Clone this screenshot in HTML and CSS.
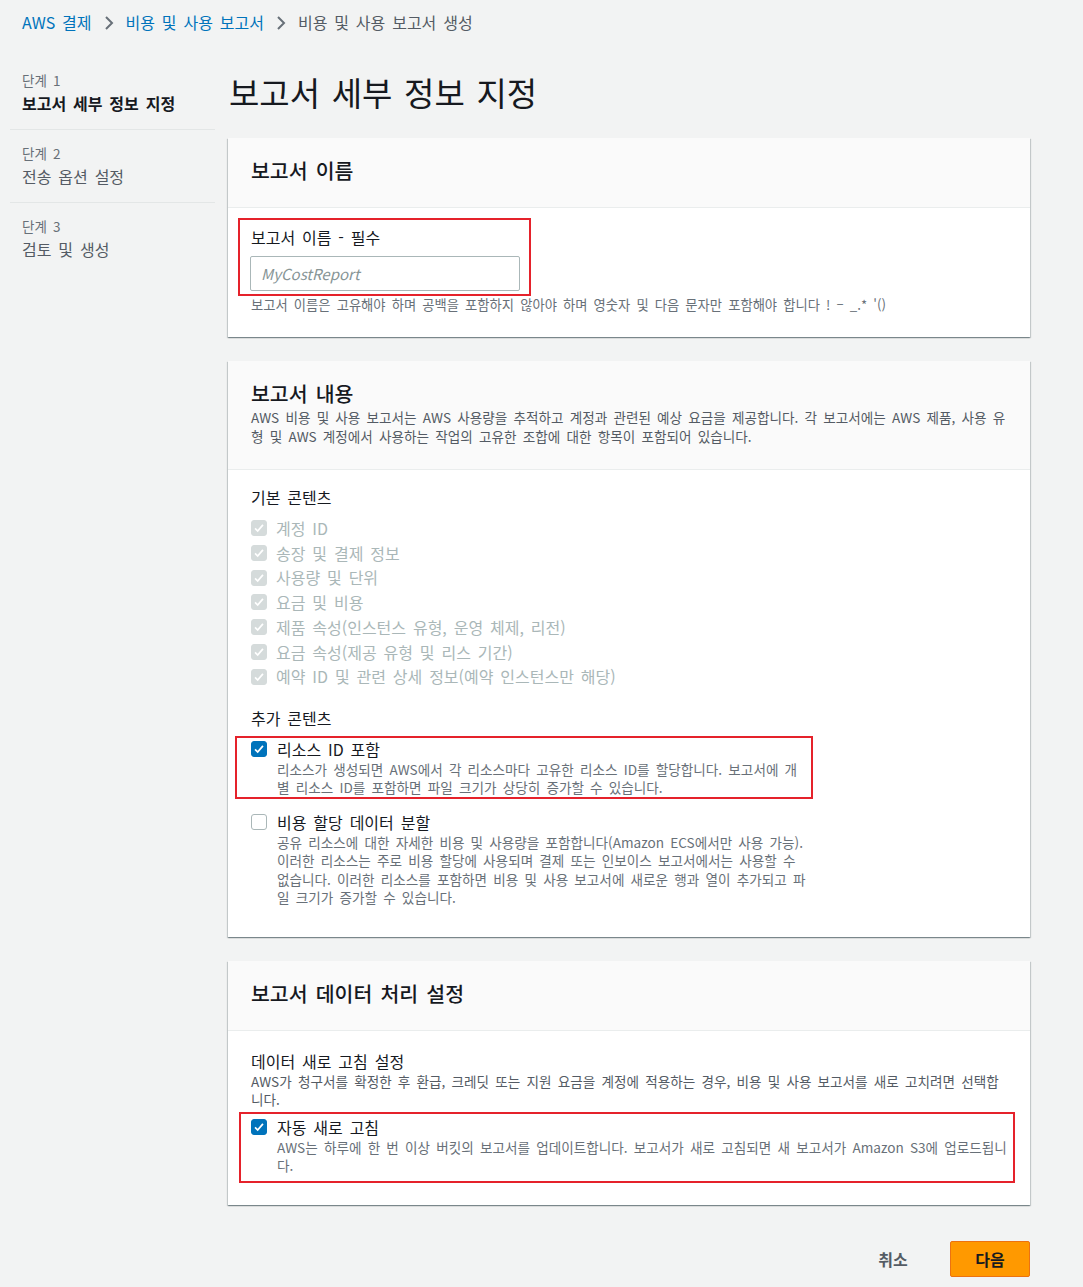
FILE: index.html
```html
<!DOCTYPE html>
<html lang="ko">
<head>
    <meta charset="UTF-8">
    <meta name="viewport" content="width=device-width, initial-scale=1.0">
    <title>비용 및 사용 보고서 생성</title>
    <link rel="stylesheet" href="styles.css">
</head>
<body>
    <nav class="breadcrumb">
        <a class="crumb-link" href="#">AWS 결제</a>
        <svg class="crumb-sep" viewBox="0 0 10 16"><polyline points="2,2 8,8 2,14" fill="none" stroke="#687078" stroke-width="2"/></svg>
        <a class="crumb-link" href="#">비용 및 사용 보고서</a>
        <svg class="crumb-sep" viewBox="0 0 10 16"><polyline points="2,2 8,8 2,14" fill="none" stroke="#687078" stroke-width="2"/></svg>
        <span class="crumb-current">비용 및 사용 보고서 생성</span>
    </nav>

    <div class="layout">
        <ul class="steps">
            <li class="step">
                <div class="step-num">단계 1</div>
                <div class="step-name active">보고서 세부 정보 지정</div>
            </li>
            <li class="step">
                <div class="step-num">단계 2</div>
                <div class="step-name">전송 옵션 설정</div>
            </li>
            <li class="step">
                <div class="step-num">단계 3</div>
                <div class="step-name">검토 및 생성</div>
            </li>
        </ul>

        <main class="main">
            <h1 class="page-title">보고서 세부 정보 지정</h1>

            <section class="panel">
                <div class="panel-header">
                    <h2 class="panel-title">보고서 이름</h2>
                </div>
                <div class="panel-body body-name">
                    <div class="highlight name-box">
                        <label class="field-label" for="report-name">보고서 이름 - 필수</label>
                        <input class="text-input" id="report-name" type="text" placeholder="MyCostReport">
                    </div>
                    <p class="hint">보고서 이름은 고유해야 하며 공백을 포함하지 않아야 하며 영숫자 및 다음 문자만 포함해야 합니다 ! – _.* '()</p>
                </div>
            </section>

            <section class="panel">
                <div class="panel-header">
                    <h2 class="panel-title">보고서 내용</h2>
                    <p class="panel-desc">AWS 비용 및 사용 보고서는 AWS 사용량을 추적하고 계정과 관련된 예상 요금을 제공합니다. 각 보고서에는 AWS 제품, 사용 유형 및 AWS 계정에서 사용하는 작업의 고유한 조합에 대한 항목이 포함되어 있습니다.</p>
                </div>
                <div class="panel-body body-content">
                    <div class="field-label">기본 콘텐츠</div>
                    <ul class="check-list">
                        <li class="check-row disabled"><span class="box checked"><svg viewBox="0 0 16 16"><polyline points="3.5,8.5 6.5,11.5 12.5,4.5"/></svg></span>계정 ID</li>
                        <li class="check-row disabled"><span class="box checked"><svg viewBox="0 0 16 16"><polyline points="3.5,8.5 6.5,11.5 12.5,4.5"/></svg></span>송장 및 결제 정보</li>
                        <li class="check-row disabled"><span class="box checked"><svg viewBox="0 0 16 16"><polyline points="3.5,8.5 6.5,11.5 12.5,4.5"/></svg></span>사용량 및 단위</li>
                        <li class="check-row disabled"><span class="box checked"><svg viewBox="0 0 16 16"><polyline points="3.5,8.5 6.5,11.5 12.5,4.5"/></svg></span>요금 및 비용</li>
                        <li class="check-row disabled"><span class="box checked"><svg viewBox="0 0 16 16"><polyline points="3.5,8.5 6.5,11.5 12.5,4.5"/></svg></span>제품 속성(인스턴스 유형, 운영 체제, 리전)</li>
                        <li class="check-row disabled"><span class="box checked"><svg viewBox="0 0 16 16"><polyline points="3.5,8.5 6.5,11.5 12.5,4.5"/></svg></span>요금 속성(제공 유형 및 리스 기간)</li>
                        <li class="check-row disabled"><span class="box checked"><svg viewBox="0 0 16 16"><polyline points="3.5,8.5 6.5,11.5 12.5,4.5"/></svg></span>예약 ID 및 관련 상세 정보(예약 인스턴스만 해당)</li>
                    </ul>

                    <div class="field-label extra-label">추가 콘텐츠</div>
                    <div class="highlight resource-box">
                        <div class="option">
                            <span class="box checked on"><svg viewBox="0 0 16 16"><polyline points="3.5,8.5 6.5,11.5 12.5,4.5"/></svg></span>
                            <div class="option-text">
                                <div class="option-label">리소스 ID 포함</div>
                                <p class="option-desc narrow">리소스가 생성되면 AWS에서 각 리소스마다 고유한 리소스 ID를 할당합니다. 보고서에 개별 리소스 ID를 포함하면 파일 크기가 상당히 증가할 수 있습니다.</p>
                            </div>
                        </div>
                    </div>
                    <div class="option split-option">
                        <span class="box"></span>
                        <div class="option-text">
                            <div class="option-label">비용 할당 데이터 분할</div>
                            <p class="option-desc narrow">공유 리소스에 대한 자세한 비용 및 사용량을 포함합니다(Amazon ECS에서만 사용 가능). 이러한 리소스는 주로 비용 할당에 사용되며 결제 또는 인보이스 보고서에서는 사용할 수 없습니다. 이러한 리소스를 포함하면 비용 및 사용 보고서에 새로운 행과 열이 추가되고 파일 크기가 증가할 수 있습니다.</p>
                        </div>
                    </div>
                </div>
            </section>

            <section class="panel">
                <div class="panel-header">
                    <h2 class="panel-title">보고서 데이터 처리 설정</h2>
                </div>
                <div class="panel-body body-refresh">
                    <div class="field-label">데이터 새로 고침 설정</div>
                    <p class="option-desc">AWS가 청구서를 확정한 후 환급, 크레딧 또는 지원 요금을 계정에 적용하는 경우, 비용 및 사용 보고서를 새로 고치려면 선택합니다.</p>
                    <div class="highlight refresh-box">
                        <div class="option">
                            <span class="box checked on"><svg viewBox="0 0 16 16"><polyline points="3.5,8.5 6.5,11.5 12.5,4.5"/></svg></span>
                            <div class="option-text">
                                <div class="option-label">자동 새로 고침</div>
                                <p class="option-desc">AWS는 하루에 한 번 이상 버킷의 보고서를 업데이트합니다. 보고서가 새로 고침되면 새 보고서가 Amazon S3에 업로드됩니다.</p>
                            </div>
                        </div>
                    </div>
                </div>
            </section>

            <div class="actions">
                <button class="btn-link" type="button">취소</button>
                <button class="btn-primary" type="button">다음</button>
            </div>
        </main>
    </div>
</body>
</html>
```

FILE: styles.css
```css
body {
    margin: 0;
    background-color: #f2f3f3;
    font-family: "Noto Sans CJK KR", "Noto Sans", sans-serif;
    color: #16191f;
    word-spacing: 0.15em;
}

p, h1, h2, ul {
    margin: 0;
    padding: 0;
}

ul {
    list-style: none;
}

/* breadcrumb */
.breadcrumb {
    height: 57px;
    box-sizing: border-box;
    padding: 11px 0 0 22px;
    display: flex;
    align-items: flex-start;
    gap: 12px;
    font-size: 16px;
    line-height: 22px;
}

.crumb-link {
    color: #0073bb;
    text-decoration: none;
}

.crumb-current {
    color: #545b64;
}

.crumb-sep {
    width: 10px;
    height: 16px;
    margin-top: 4px;
}

/* layout */
.layout {
    display: flex;
}

.steps {
    width: 205px;
    margin-left: 10px;
}

.step {
    padding: 14px 0 14px 12px;
    border-bottom: 1px solid #e3e6e6;
}

.step:last-child {
    border-bottom: none;
}

.step-num {
    font-size: 13.5px;
    line-height: 18px;
    color: #687078;
}

.step-name {
    margin-top: 2px;
    font-size: 16px;
    line-height: 24px;
    color: #545b64;
}

.step-name.active {
    color: #16191f;
    font-weight: 700;
}

.main {
    width: 802px;
    margin-left: 13px;
}

.page-title {
    margin: 17px 0 28px 1px;
    font-size: 33px;
    line-height: 36px;
    font-weight: 400;
}

/* panels */
.panel {
    background: #fff;
    margin-bottom: 24px;
    box-shadow: 0 1px 1px 0 rgba(0, 28, 36, 0.3), 1px 1px 1px 0 rgba(0, 28, 36, 0.15), -1px 1px 1px 0 rgba(0, 28, 36, 0.15);
}

.panel-header {
    background: #fafafa;
    border-bottom: 1px solid #eaeded;
    padding: 18px 23px 23px;
}

.panel-title {
    font-size: 20.5px;
    line-height: 28px;
    font-weight: 500;
}

.panel-desc {
    margin-top: 1px;
    font-size: 13.6px;
    line-height: 19px;
    color: #545b64;
}

.panel-body {
    padding: 10px 23px 23px;
}

.highlight {
    border: 2px solid #e5222b;
    box-sizing: border-box;
}

.name-box {
    width: 293px;
    margin-left: -13px;
    padding: 6px 10px 3px 11px;
}

.field-label {
    display: block;
    font-size: 16px;
    line-height: 22px;
}

.text-input {
    display: block;
    box-sizing: border-box;
    width: 270px;
    height: 35px;
    margin: 8px 0 0 -1px;
    padding: 0 10px;
    border: 1px solid #aab7b8;
    border-radius: 2px;
    font-family: inherit;
    font-size: 15px;
    color: #16191f;
}

.text-input::placeholder {
    color: #879596;
    font-style: italic;
}

.hint {
    font-size: 13.3px;
    line-height: 18px;
    color: #687078;
}

/* report content */
.body-content {
    padding: 16px 23px 30px;
}

.check-list {
    margin-top: 8px;
}

.check-row {
    display: flex;
    align-items: center;
    gap: 9px;
    font-size: 16px;
    line-height: 24.7px;
}

.check-row.disabled {
    color: #aab7b8;
}

.box {
    flex: none;
    width: 16px;
    height: 16px;
    box-sizing: border-box;
    border: 1px solid #aab7b8;
    border-radius: 3px;
    background: #fff;
}

.box svg {
    display: block;
    width: 14px;
    height: 14px;
    fill: none;
    stroke: #fff;
    stroke-width: 2;
}

.box.checked {
    border-color: #d5dbdb;
    background: #d5dbdb;
}

.box.checked.on {
    border-color: #0073bb;
    background: #0073bb;
}

.extra-label {
    margin-top: 18px;
}

.resource-box {
    width: 578px;
    margin: 7px 0 0 -16px;
    padding: 0 0 0 14px;
}

.option {
    display: flex;
    gap: 10px;
}

.option .box {
    margin-top: 3px;
}

.option-label {
    font-size: 16px;
    line-height: 22px;
}

.option-desc {
    font-size: 13.6px;
    line-height: 18.5px;
    color: #687078;
}

.option-desc.narrow {
    width: 532px;
}

.split-option {
    margin-top: 12px;
}

/* data refresh */
.body-refresh {
    padding: 19px 23px 22px;
}

.body-refresh > .option-desc {
    color: #545b64;
}

.refresh-box {
    width: 776px;
    margin: 3px 0 0 -12px;
    padding: 2px 0 6px 10px;
}

/* buttons */
.actions {
    display: flex;
    justify-content: flex-end;
    align-items: center;
    gap: 17px;
    margin-top: 36px;
    padding-bottom: 11px;
}

.btn-link {
    width: 80px;
    height: 36px;
    border: none;
    background: none;
    font-family: inherit;
    font-size: 16px;
    font-weight: 700;
    color: #545b64;
    cursor: pointer;
}

.btn-primary {
    width: 80px;
    height: 36px;
    border: 1px solid #ec7211;
    border-radius: 2px;
    background: #ff9900;
    font-family: inherit;
    font-size: 16px;
    font-weight: 700;
    color: #16191f;
    cursor: pointer;
}
```
